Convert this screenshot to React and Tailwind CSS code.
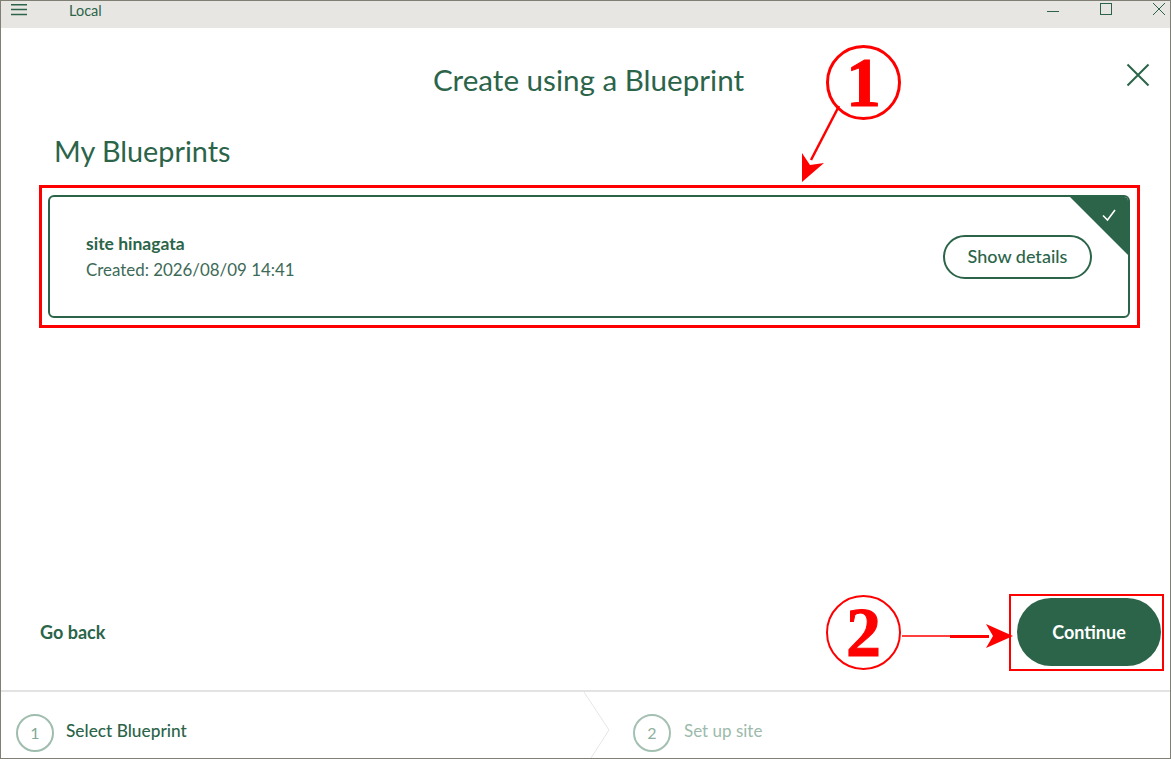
import React from "react";

const GREEN = "#2b6449";

function Annotations() {
  return (
    <>
      <div className="absolute left-[38px] top-[184px] w-[1101px] h-[143px] border-[3px] border-[#ff0000]" />
      <div className="absolute left-[1008px] top-[593px] w-[155px] h-[77px] border-[2px] border-[#ff0000]" />
      <div className="absolute left-[825px] top-[44px] w-[75px] h-[75px] rounded-full border-[3px] border-[#ff0000] flex items-center justify-center text-[#ff0000] text-[70px] font-bold leading-none [-webkit-text-stroke:1px_#ff0000] font-['Liberation_Serif',serif]">1</div>
      <div className="absolute left-[825px] top-[594px] w-[75px] h-[75px] rounded-full border-[2px] border-[#ff0000] flex items-center justify-center text-[#ff0000] text-[70px] font-bold leading-none [-webkit-text-stroke:1px_#ff0000] font-['Liberation_Serif',serif]">2</div>
      <svg className="absolute left-[794px] top-[99px]" width="60" height="90" viewBox="0 0 60 90" fill="none">
        <path d="M44 6 L16 60" stroke="#ff0000" strokeWidth="2.5" />
        <path d="M7 82 L7 53 L15 65 L29 63 Z" fill="#ff0000" />
      </svg>
      <svg className="absolute left-[900px] top-[618px]" width="115" height="34" viewBox="0 0 115 34" fill="none">
        <path d="M1 17 L60 17" stroke="#ff0000" strokeWidth="1.5" />
        <path d="M49 17.5 L88 17.5" stroke="#ff0000" strokeWidth="3" />
        <path d="M112 17 L85 29 L92 17 L85 5 Z" fill="#ff0000" />
      </svg>
    </>
  );
}

function Step({ n, label, dim, className }) {
  return (
    <div className={`flex items-center ${dim ? "gap-[13px]" : "gap-3"} ${className}`}>
      <div className={`w-[38px] h-[38px] rounded-full border-2 flex items-center justify-center text-[16px] ${dim ? "border-[#a4c0b2] text-[#8fb0a0]" : "border-[#9fbdae] text-[#7fa998]"}`}>{n}</div>
      <span className={`mb-[4px] ${dim ? "text-[17px] text-[#9dbaac]" : "text-[17.3px] text-[#2b6449] font-medium"}`}>{label}</span>
    </div>
  );
}

export default function App() {
  return (
    <div className="relative w-[1171px] h-[759px] bg-white border border-[#7f7f73] overflow-hidden flex flex-col font-['Lato',sans-serif] text-[#2b6449]">
      <header className="h-[27px] shrink-0 bg-[#e7e6e3] flex items-start">
        <svg className="ml-[10px] mt-[3px]" width="16" height="12" viewBox="0 0 16 12">
          <path d="M0 .7h16M0 5.5h16M0 10.5h16" stroke={GREEN} strokeWidth="1.4" />
        </svg>
        <span className="ml-[42px] mt-[1px] text-[14.5px] leading-[18px]">Local</span>
        <div className="ml-auto flex items-start mt-[2px] mr-[5px] gap-[41px]">
          <svg width="12" height="12" viewBox="0 0 12 12"><path d="M0 8.5h12" stroke={GREEN} strokeWidth="1" /></svg>
          <svg width="12" height="12" viewBox="0 0 12 12"><rect x=".5" y=".5" width="11" height="11" fill="none" stroke={GREEN} /></svg>
          <svg width="12" height="12" viewBox="0 0 12 12"><path d="M0 0l12 12M12 0L0 12" stroke={GREEN} strokeWidth="1" /></svg>
        </div>
      </header>

      <main className="flex-1 flex flex-col relative">
        <div className="h-[107px] shrink-0 relative flex justify-center">
          <h1 className="mt-[31px] ml-[6px] text-[29.6px] leading-[42px] font-normal">Create using a Blueprint</h1>
          <svg className="absolute right-[20px] top-[35px]" width="24" height="24" viewBox="0 0 24 24"><path d="M1.5 1.5l21 21M22.5 1.5l-21 21" stroke={GREEN} strokeWidth="2" /></svg>
        </div>
        <h2 className="ml-[53px] text-[28.8px] leading-[32px] font-normal">My Blueprints</h2>
        <div className="relative mt-[28px] ml-[47px] w-[1082px] h-[123px] rounded-[6px] border-2 border-[#2b6449] flex items-center justify-between overflow-hidden pl-[36px] pr-[36px]">
          <div className="flex flex-col">
            <span className="text-[17.5px] leading-[26px] font-bold">site hinagata</span>
            <span className="text-[16.9px] leading-[26px] text-[#3d6a57]">Created: 2026/08/09 14:41</span>
          </div>
          <button className="w-[149px] h-[44px] rounded-full border-2 border-[#2b6449] text-[18px] font-medium">Show details</button>
          <svg className="absolute right-0 top-0" width="58" height="58" viewBox="0 0 58 58">
            <path d="M0 0H58V58Z" fill={GREEN} />
            <path d="M33 18.5l4.5 4.5 7.5-10" fill="none" stroke="#fff" strokeWidth="1.6" />
          </svg>
        </div>
        <div className="mt-auto h-[68px] mb-[24px] flex items-center justify-between pl-[39px] pr-[9px]">
          <span className="text-[18px] font-bold">Go back</span>
          <button className="w-[144px] h-[68px] rounded-full bg-[#2b6449] text-white text-[18px] font-bold">Continue</button>
        </div>
      </main>

      <footer className="h-[68px] shrink-0 border-t-2 border-[#e3e3e3] flex items-start pt-[22px] relative">
        <Step n="1" label="Select Blueprint" className="w-[632px] pl-[15px]" />
        <svg className="absolute left-[583px] top-0" width="28" height="66" viewBox="0 0 28 66" fill="none">
          <path d="M0 0L25 38L7 66" stroke="#e6e6e6" strokeWidth="1" />
        </svg>
        <Step n="2" label="Set up site" dim />
      </footer>

      <Annotations />
    </div>
  );
}
